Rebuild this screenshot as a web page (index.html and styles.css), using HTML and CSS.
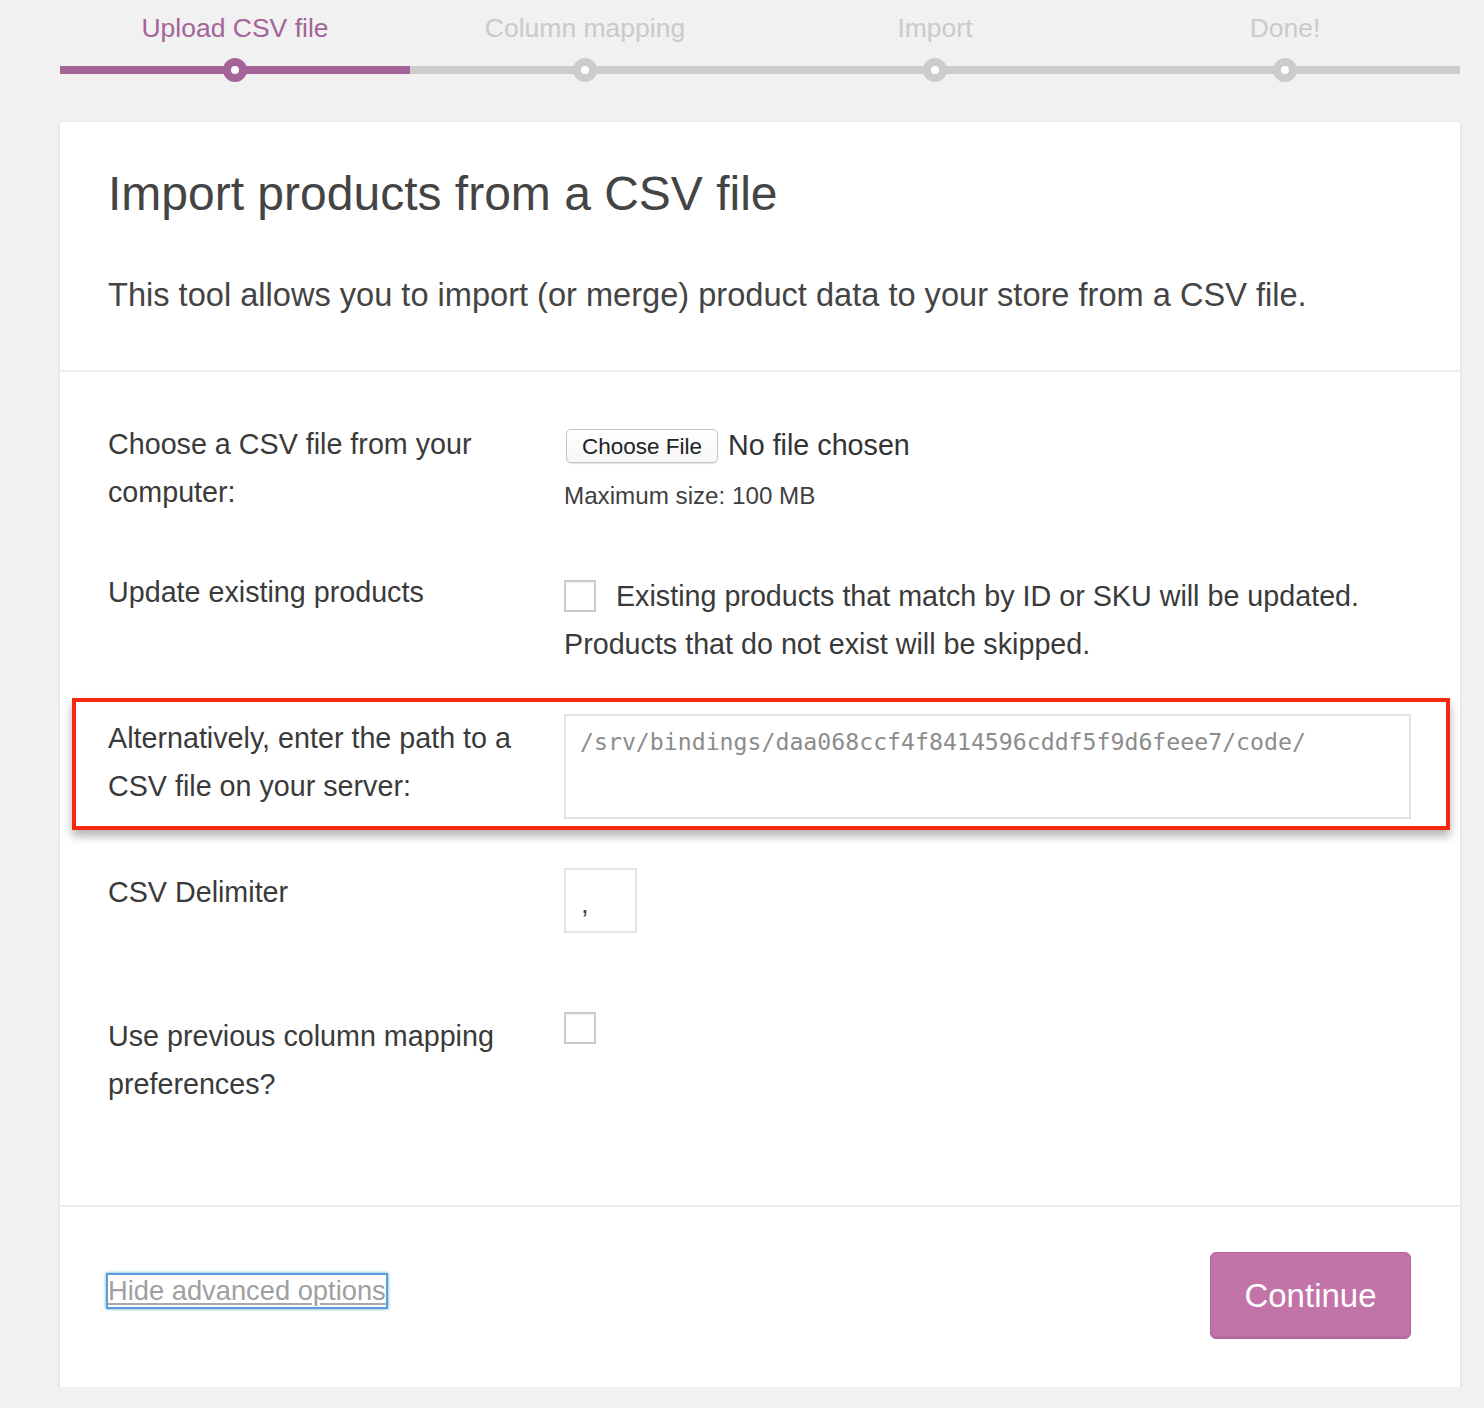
FILE: index.html
```html
<!DOCTYPE html>
<html lang="en">
<head>
<meta charset="utf-8">
<title>Import products from a CSV file</title>
<link rel="stylesheet" href="styles.css">
</head>
<body>
<div class="wrap">
  <ol class="steps">
    <li class="step active"><span class="step-label">Upload CSV file</span><span class="track"><span class="dot"></span></span></li>
    <li class="step"><span class="step-label">Column mapping</span><span class="track"><span class="dot"></span></span></li>
    <li class="step"><span class="step-label">Import</span><span class="track"><span class="dot"></span></span></li>
    <li class="step"><span class="step-label">Done!</span><span class="track"><span class="dot"></span></span></li>
  </ol>

  <form class="card">
    <header class="card-head">
      <h1 class="title">Import products from a CSV file</h1>
      <p class="intro">This tool allows you to import (or merge) product data to your store from a CSV file.</p>
    </header>

    <section class="rows">
      <div class="row r1">
        <label class="row-label">Choose a CSV file from your computer:</label>
        <div class="row-field">
          <div class="file-line"><span class="file-btn">Choose File</span><span class="file-none">No file chosen</span></div>
          <div class="desc">Maximum size: 100 MB</div>
        </div>
      </div>

      <div class="row r2">
        <label class="row-label">Update existing products</label>
        <div class="row-field text-field">
          <input type="checkbox" class="check check-inline"> Existing products that match by ID or SKU will be updated. Products that do not exist will be skipped.
        </div>
      </div>

      <div class="row r3 highlight">
        <label class="row-label">Alternatively, enter the path to a CSV file on your server:</label>
        <div class="row-field">
          <input type="text" class="path-input" value="/srv/bindings/daa068ccf4f8414596cddf5f9d6feee7/code/">
        </div>
      </div>

      <div class="row r4">
        <label class="row-label">CSV Delimiter</label>
        <div class="row-field">
          <input type="text" class="delim-input" value=",">
        </div>
      </div>

      <div class="row r5">
        <label class="row-label">Use previous column mapping preferences?</label>
        <div class="row-field">
          <input type="checkbox" class="check">
        </div>
      </div>
    </section>

    <footer class="card-foot">
      <a class="toggle-link" href="#">Hide advanced options</a>
      <button type="button" class="continue">Continue</button>
    </footer>
  </form>
</div>
</body>
</html>
```

FILE: styles.css
```css
html, body {
  margin: 0;
  padding: 0;
}

body {
  background: #f1f1f1;
  font-family: "Liberation Sans", Arial, sans-serif;
  color: #3c3c3c;
}

.wrap {
  width: 1400px;
  margin-left: 60px;
}

/* ---------- progress steps ---------- */
.steps {
  list-style: none;
  margin: 0;
  padding: 0;
  display: flex;
}

.step {
  width: 350px;
  display: flex;
  flex-direction: column;
  align-items: center;
}

.step-label {
  display: block;
  height: 56px;
  line-height: 56px;
  font-size: 26.5px;
  color: #cacaca;
}

.track {
  position: relative;
  display: block;
  width: 100%;
  height: 8px;
  margin-top: 10px;
  background: #cccccc;
}

.dot {
  position: absolute;
  left: 50%;
  top: 50%;
  width: 8px;
  height: 8px;
  margin: -12px 0 0 -12px;
  border: 8px solid #cccccc;
  border-radius: 50%;
  background: #ffffff;
}

.step.active .step-label {
  color: #a46497;
}

.step.active .track {
  background: #a46497;
}

.step.active .dot {
  border-color: #a46497;
}

/* ---------- card ---------- */
.card {
  display: block;
  margin-top: 48px;
  background: #ffffff;
  box-shadow: 0 1px 3px rgba(0, 0, 0, 0.13);
}

.card-head {
  padding: 44px 48px 51px;
  border-bottom: 2px solid #eeeeee;
}

.title {
  margin: 0;
  font-size: 48px;
  line-height: 56px;
  font-weight: normal;
  color: #444444;
}

.intro {
  margin: 49px 0 0;
  font-size: 32.6px;
  line-height: 48px;
  color: #444444;
}

/* ---------- form rows ---------- */
.rows {
  padding: 48px 48px 97px;
  border-bottom: 2px solid #eeeeee;
}

.row {
  display: grid;
  grid-template-columns: 456px 1fr;
  font-size: 28.7px;
  line-height: 48px;
}

.r2 { margin-top: 48px; }
.r3 { margin-top: 46px; }
.r4 { margin-top: 49px; }
.r5 { margin-top: 79px; }

.row-label {
  display: block;
  padding-right: 20px;
  color: #3a3a3a;
}

.row-field {
  color: #3a3a3a;
}

.r1 .row-label {
  padding-right: 70px;
}

.r3 .row-label {
  padding-right: 30px;
}

.r5 .row-label {
  padding-right: 60px;
}

.file-line {
  display: flex;
  align-items: center;
  height: 48px;
  padding-top: 2px;
}

.file-btn {
  box-sizing: border-box;
  width: 152px;
  height: 34px;
  margin-left: 2px;
  border: 1px solid #c6c6c6;
  border-radius: 5px;
  background: linear-gradient(#ffffff, #f6f6f6);
  box-shadow: 0 1px 1px rgba(0, 0, 0, 0.12);
  font-size: 22.5px;
  line-height: 33px;
  text-align: center;
  color: #222222;
}

.file-none {
  margin-left: 10px;
  margin-top: -2px;
  font-size: 28.7px;
  color: #333333;
}

.desc {
  margin-top: 2px;
  font-size: 24.2px;
  line-height: 48px;
  color: #3f3f3f;
}

.text-field {
  padding-top: 4px;
}

.check {
  -webkit-appearance: none;
  appearance: none;
  box-sizing: border-box;
  display: block;
  width: 32px;
  height: 32px;
  margin: 0;
  border: 2px solid #c8ccd0;
  border-radius: 1px;
  background: #ffffff;
  box-shadow: inset 0 1px 2px rgba(0, 0, 0, 0.07);
}

.check-inline {
  display: inline-block;
  vertical-align: -6px;
  margin-right: 12px;
}

.path-input {
  box-sizing: border-box;
  display: block;
  width: 847px;
  height: 105px;
  margin: 0;
  padding: 12px 14px 63px;
  border: 2px solid #e2e2e2;
  border-radius: 0;
  background: #ffffff;
  font-family: "DejaVu Sans Mono", "Liberation Mono", monospace;
  font-size: 23.2px;
  color: #8c8c8c;
  outline: none;
}

.delim-input {
  box-sizing: border-box;
  display: block;
  width: 73px;
  height: 65px;
  margin: 0;
  padding: 6px 15px 0;
  border: 2px solid #e4e4e4;
  border-radius: 0;
  background: #ffffff;
  font-family: "Liberation Sans", Arial, sans-serif;
  font-size: 28px;
  color: #444444;
  outline: none;
}

/* annotation box drawn over the server-path row */
.highlight {
  position: relative;
}

.highlight::after {
  content: "";
  position: absolute;
  left: -36px;
  right: -38px;
  top: -16px;
  bottom: -11px;
  border: 4px solid #f5290f;
  box-shadow: 0 6px 9px rgba(0, 0, 0, 0.3);
  pointer-events: none;
}

/* ---------- footer ---------- */
.card-foot {
  height: 180px;
  padding: 0 48px;
  display: flex;
  align-items: center;
  justify-content: space-between;
}

.toggle-link {
  margin-left: -2px;
  margin-bottom: 12px;
  border: 2px solid #5b9dd9;
  box-shadow: 0 0 3px rgba(30, 140, 190, 0.8);
  font-size: 27.3px;
  line-height: 32px;
  color: #a0a0a0;
  text-decoration: underline;
  text-decoration-color: #a8a8a8;
  text-underline-offset: 3px;
}

.continue {
  box-sizing: border-box;
  width: 201px;
  height: 87px;
  margin-right: 1px;
  margin-bottom: 3px;
  border: 1px solid #b262a0;
  border-radius: 6px;
  background: #c273a8;
  box-shadow: inset 0 -2px 0 rgba(0, 0, 0, 0.06);
  font-family: "Liberation Sans", Arial, sans-serif;
  font-size: 33px;
  color: #ffffff;
  padding: 0;
}
```
